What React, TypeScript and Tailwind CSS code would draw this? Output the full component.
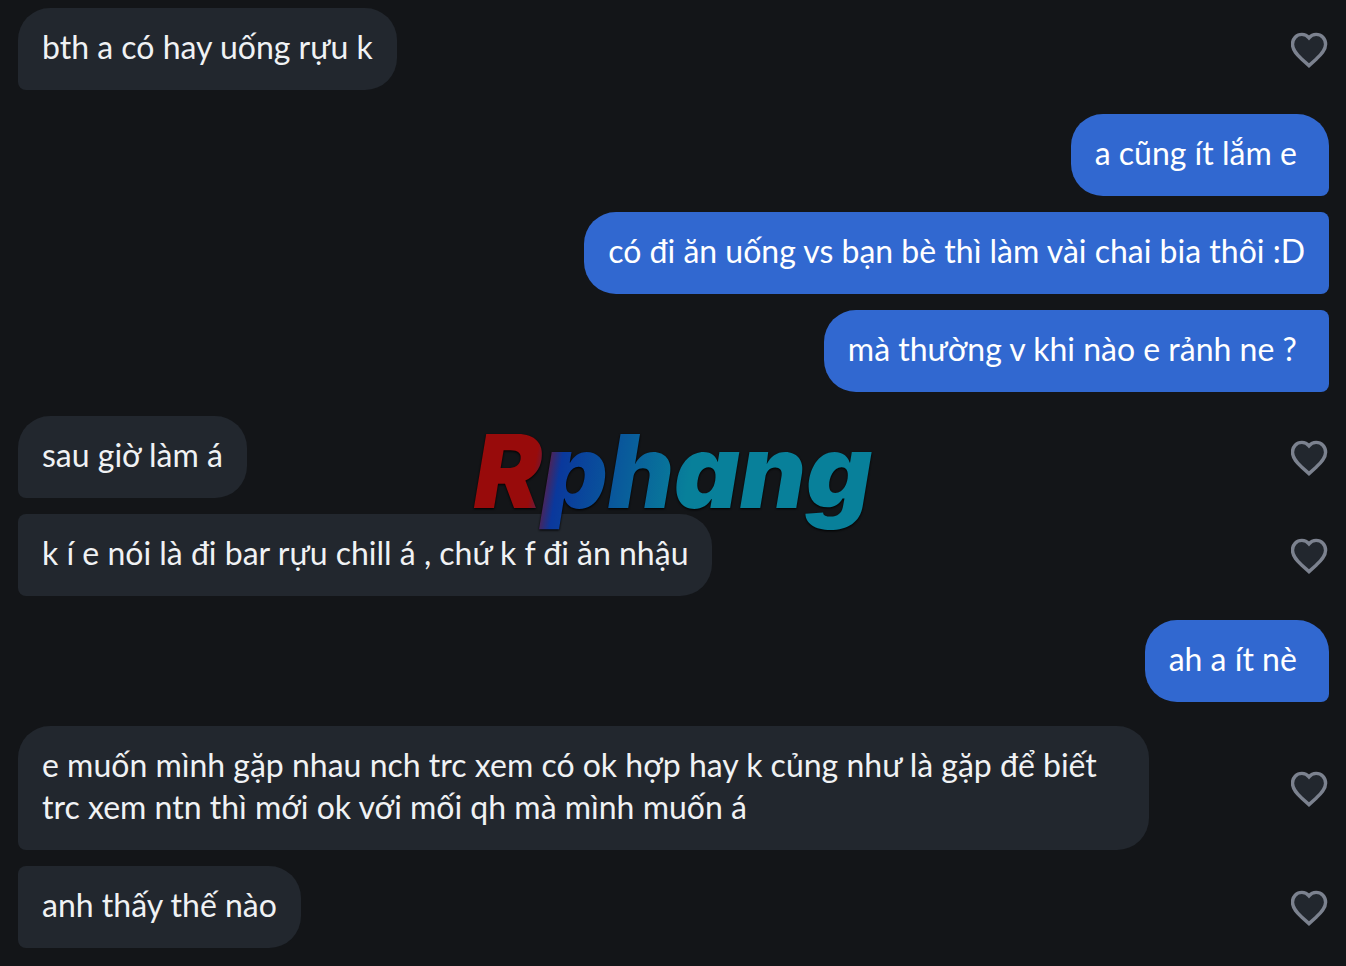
import clsx from 'clsx';
import { useState } from 'react';

type Message = {
    id: number;
    text: string;
};

type Group = {
    id: number;
    mine: boolean;
    messages: Message[];
};

const groups: Group[] = [
    {
        id: 1,
        mine: false,
        messages: [{ id: 1, text: 'bth a có hay uống rựu k' }],
    },
    {
        id: 2,
        mine: true,
        messages: [
            { id: 2, text: 'a cũng ít lắm e\u00a0' },
            {
                id: 3,
                text: 'có đi ăn uống vs bạn bè thì làm vài chai bia thôi :D',
            },
            { id: 4, text: 'mà thường v khi nào e rảnh ne ?\u00a0' },
        ],
    },
    {
        id: 3,
        mine: false,
        messages: [
            { id: 5, text: 'sau giờ làm á' },
            {
                id: 6,
                text: 'k í e nói là đi bar rựu chill á , chứ k f đi ăn nhậu',
            },
        ],
    },
    {
        id: 4,
        mine: true,
        messages: [{ id: 7, text: 'ah a ít nè\u00a0' }],
    },
    {
        id: 5,
        mine: false,
        messages: [
            {
                id: 8,
                text: 'e muốn mình gặp nhau nch trc xem có ok hợp hay k củng như là gặp để biết trc xem ntn thì mới ok với mối qh mà mình muốn á',
            },
            { id: 9, text: 'anh thấy thế nào' },
        ],
    },
];

function LikeButton() {
    const [liked, setLiked] = useState(false);

    return (
        <button
            type="button"
            aria-label="Thích tin nhắn"
            aria-pressed={liked}
            onClick={() => setLiked(!liked)}
            className="shrink-0 cursor-pointer"
        >
            <svg
                viewBox="0 0 38 38"
                className={clsx(
                    'block size-[38px] stroke-[#7c828f]',
                    liked ? 'fill-[#3168d0]' : 'fill-[#22272e]',
                )}
                strokeWidth="3.4"
            >
                <path d="M18 7.8C16.2 5.6 13.7 4.4 10.9 4.4C5.5 4.4 1.5 8.6 1.5 14.2C1.5 20.4 6.4 25 10.6 28.9L18 35.6L25.4 28.9C29.6 25 34.6 20.4 34.6 14.2C34.6 8.6 30.5 4.4 25.1 4.4C22.3 4.4 19.8 5.6 18 7.8Z" />
            </svg>
        </button>
    );
}

function Bubble({
    message,
    mine,
    first,
}: {
    message: Message;
    mine: boolean;
    first: boolean;
}) {
    return (
        <li
            className={clsx(
                'flex items-center',
                mine ? 'justify-end' : 'justify-between',
            )}
        >
            <p
                className={clsx(
                    'max-w-[1131px] rounded-[32px] px-6 pt-[18px] pb-[22px] text-[32px] leading-[42px]',
                    mine
                        ? 'rounded-br-lg bg-[#3168d0] text-white'
                        : 'rounded-bl-lg bg-[#22272e] text-[#f0f2f4]',
                    !first && (mine ? 'rounded-tr-lg' : 'rounded-tl-lg'),
                )}
            >
                {message.text}
            </p>
            {!mine && <LikeButton />}
        </li>
    );
}

export default function App() {
    return (
        <main className="relative min-h-screen bg-[#131518] pt-2 pr-[17px] pb-[18px] pl-[18px] font-['Lato',sans-serif]">
            <div className="flex flex-col gap-6">
                {groups.map((group) => (
                    <ul key={group.id} className="flex flex-col gap-4">
                        {group.messages.map((message, index) => (
                            <Bubble
                                key={message.id}
                                message={message}
                                mine={group.mine}
                                first={index === 0}
                            />
                        ))}
                    </ul>
                ))}
            </div>

            {/* Watermark */}
            <div className="pointer-events-none absolute inset-0 flex items-center justify-center pb-6">
                <span className="bg-linear-[100deg] from-[#980b0b] from-18% via-[#0a389c] via-24% to-[#08809a] to-54% bg-clip-text px-2 font-['Inter',sans-serif] text-[102px] leading-[120px] font-black text-transparent italic drop-shadow-[0_1px_1px_#000000]">
                    Rphang
                </span>
            </div>
        </main>
    );
}
